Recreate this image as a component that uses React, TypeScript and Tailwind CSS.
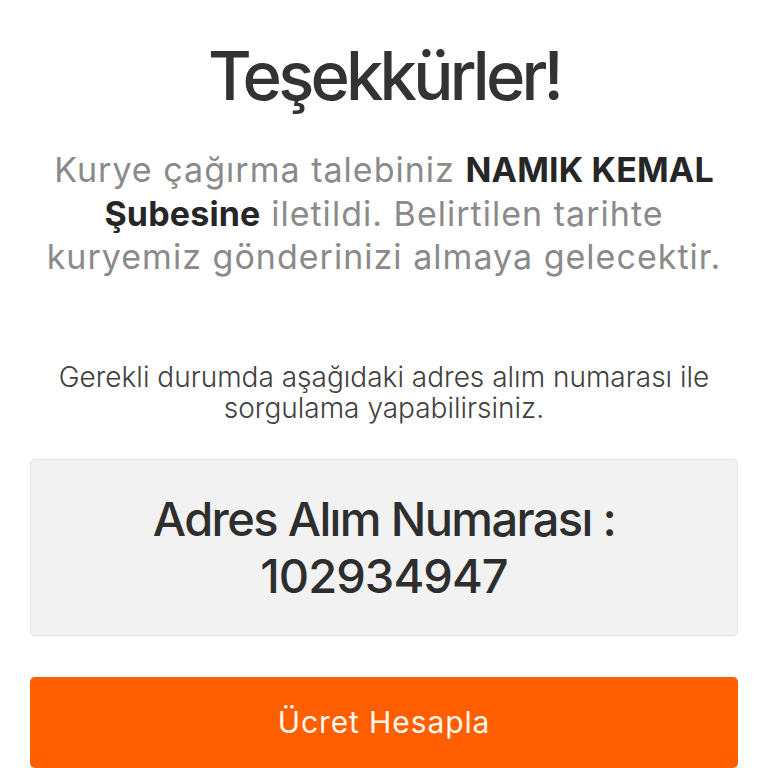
export default function App() {
  return (
    <div
      className="min-h-screen bg-white px-[30px] pt-[36px] text-center"
      style={{ fontFamily: "Inter, 'Noto Sans', sans-serif" }}
    >
      <h1 className="text-[67px] leading-[80px] font-medium tracking-[-0.057em] text-[#333333]">
        Teşekkürler!
      </h1>
      <p className="mt-[32px] whitespace-nowrap text-[34px] leading-[43.5px] tracking-[0.03em] text-[#8a8a8a]">
        Kurye çağırma talebiniz <span className="font-bold tracking-[0.005em] text-[#262626]">NAMIK KEMAL</span>
        <br />
        <span className="font-bold tracking-[0.005em] text-[#262626]">Şubesine</span> iletildi. Belirtilen tarihte
        <br />
        kuryemiz gönderinizi almaya gelecektir.
      </p>
      <p className="mt-[83px] whitespace-nowrap text-[28px] leading-[31px] font-light text-[#404040]">
        Gerekli durumda aşağıdaki adres alım numarası ile
        <br />
        sorgulama yapabilirsiniz.
      </p>
      <div className="mt-[35px] flex h-[177px] flex-col items-center justify-center rounded-[5px] border border-[#e3e3e3] bg-[#f2f2f2] shadow-[0_1px_2px_rgba(0,0,0,0.04)]">
        <div className="text-[47px] leading-[57.5px] font-medium tracking-[-0.035em] text-[#2e2e2e]">
          Adres Alım Numarası :
          <br />
          <span className="tracking-[-0.02em]">102934947</span>
        </div>
      </div>
      <button className="mt-[41px] flex h-[91px] w-full items-center justify-center rounded-[5px] bg-[#ff5f00] text-[30px] tracking-[0.03em] text-[#fff7ea]">
        Ücret Hesapla
      </button>
    </div>
  );
}
